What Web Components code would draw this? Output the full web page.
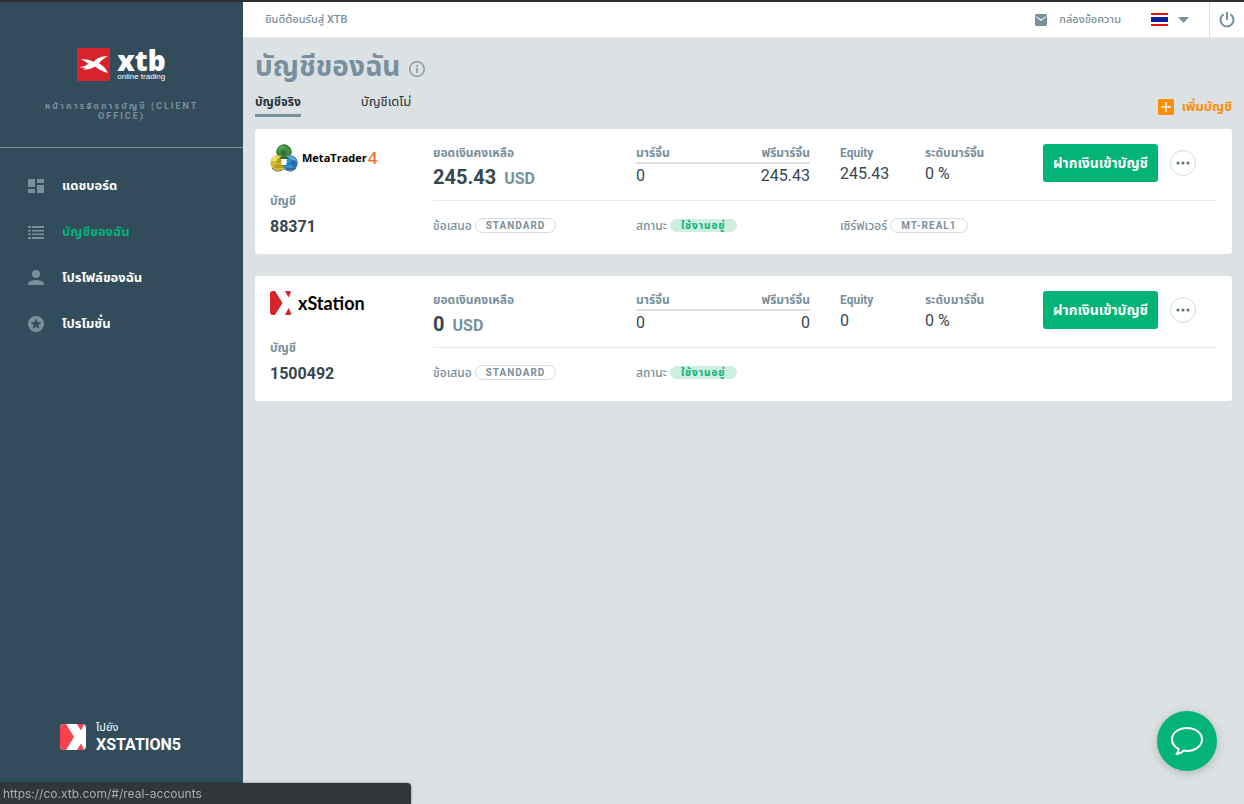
<!DOCTYPE html>
<html lang="th">
<head>
<meta charset="utf-8">
<meta name="viewport" content="width=device-width, initial-scale=1">
<title>XTB Client Office</title>
<style>
:root {
    --color-side: #324c5b;
    --color-muted: #78909c;
    --color-dark: #37474f;
    --color-page: #dce1e4;
    --color-green: #04b376;
    --color-orange: #ff8f00;
}

html, body {
    margin: 0;
    padding: 0;
}

body {
    font-family: Roboto, "Noto Sans Thai", Loma, "Liberation Sans", sans-serif;
    font-size: 12px;
    line-height: 18px;
    color: var(--color-dark);
    background-color: var(--color-page);
}
</style>
</head>
<body>
<client-office></client-office>

<script>
'use strict'

const RESET = `
    :host, div, a, button { box-sizing: border-box; }
    h1, h3, p, button { margin: 0; padding: 0; }
    a { color: inherit; text-decoration: none; }
    button { font: inherit; color: inherit; border: 0; background: none; cursor: pointer; }
`;

// Icons: [width, height, viewBox, markup]
const ICONS = {
    dashboard: [16, 14, '0 0 16 14', '<path d="M0 0h7v8H0zM0 10h7v4H0zM9 0h7v4H9zM9 6h7v8H9z"/>'],
    list: [16, 13, '0 0 16 13', '<path d="M0 0h3v2H0zM4 0h12v2H4zM0 4h3v1.500H0zM4 4h12v1.500H4zM0 7.500h3V9H0zM4 7.500h12V9H4zM0 11h3v2H0zM4 11h12v2H4z"/>'],
    person: [16, 16, '0 0 16 16', '<circle cx="8" cy="4" r="4"/><path d="M0 15v-1c0-3 5-4 8-4s8 1 8 4v1z"/>'],
    star: [16, 16, '2 2 20 20', '<path d="M12 2a10 10 0 1 0 0 20 10 10 0 0 0 0-20zm4.2 16L12 15.5 7.8 18l1.1-4.8-3.6-3.2 4.8-.4L12 5l1.9 4.6 4.8.4-3.6 3.2z"/>'],
    mail: [12, 12, '0 0 12 12', '<path fill-rule="evenodd" d="M1 0h10l1 1v10l-1 1H1l-1-1V1zM1 2v1l5 4 5-4V2L6 5.500z"/>'],
    power: [16, 16, '0 0 16 16', '<path d="M4.600 2.400a6.500 6.500 0 1 0 6.800 0M8 0v8" fill="none" stroke="currentColor" stroke-width="2"/>'],
    info: [16, 16, '0 0 16 16', '<circle cx="8" cy="8" r="7.300" fill="none" stroke="currentColor" stroke-width="1.300"/><path d="M7.300 4h1.400v1.500H7.300zM7.300 6.800h1.400V12H7.300z"/>'],
    plus: [16, 16, '0 0 16 16', '<path fill-rule="evenodd" d="M1 0h14l1 1v14l-1 1H1l-1-1V1zM7 3v4H3v2h4v4h2V9h4V7H9V3z"/>'],
    caret: [11, 6, '0 0 11 6', '<path d="M0 0h11L5.500 6z"/>'],
    dots: [14, 4, '0 0 14 4', '<circle cx="2" cy="2" r="1.500"/><circle cx="7" cy="2" r="1.500"/><circle cx="12" cy="2" r="1.500"/>'],
    chat: [32, 28, '0 0 32 28', '<path d="M16 1C7.500 1 1 6 1 12.500c0 4 2.500 7.300 6.500 9.300.3 2-.5 3.700-2 5.200 3.500-.3 5.500-1.500 7.200-3.400 1 .2 2.200.3 3.300.3 8.500 0 15-5 15-11.400S24.500 1 16 1z" fill="none" stroke="currentColor" stroke-width="2" stroke-linejoin="round"/>'],
    flag: [17, 13, '0 0 17 13', '<path fill="#fff" d="M0 0h17v13H0z"/><path fill="#e8110f" d="M0 0h17v2H0zM0 11h17v2H0z"/><path fill="#0a1f9c" d="M0 4h17v5H0z"/>'],
    xtb: [33, 33, '0 0 33 33', '<path fill="#d9232a" d="M0 0h33v33H0z"/><path fill="#fff" d="M4 11.500c5-.8 9 .2 12.500 2.500C20 9.500 25 8.200 31 8c-3.500 2-7 4.500-9 7.500 4 2 7 5 9 9.500-4.500-1.200-9-3-13-6.500-4.500 3-9 3.700-12 2.500 1.500-.3 2-.5 3.200-1.200-2.500.2-4.700 0-6.700-.8 3.500-.4 6.500-1.300 9-3.300C9.500 14.500 7.500 12.500 4 11.500z"/>'],
    station: [26, 26, '0 0 26 26', '<rect width="26" height="26" rx="4" fill="#fff"/><path fill="#f9424f" d="M4 0h2l8 13-8 13H4a4 4 0 0 1-4-4V4a4 4 0 0 1 4-4zM17 0h5a4 4 0 0 1 2 .6L21 6.500zM17 26h5a4 4 0 0 0 2-.6l-3-5.900z"/>'],
    xstation: [22, 24, '0 0 22 24', '<path fill="#d9232a" d="M3 0h2l7.500 12L5 24H3a3 3 0 0 1-3-3V3a3 3 0 0 1 3-3zM15 0h5l1 1-2.500 5.500zM15 24h5l1.500-1L18.500 17z"/>'],
    metatrader: [28, 29, '0 0 28 29', `
        <circle cx="14" cy="8" r="7.500" fill="#3f8f3d"/>
        <path fill="#57ab50" d="M8 6c1-5 5-6 8-5.500C14 4 11 6 8 6z"/>
        <circle cx="8" cy="19" r="7.700" fill="#d3b92d"/>
        <path fill="#f0df67" d="M1 17c1-4 5-6 9-4l-2 4z"/>
        <circle cx="20" cy="19" r="7.700" fill="#276fac"/>
        <path fill="#65a9d4" d="M16 12c4-1 9 0 11 5l-5-1z"/>
        <path fill="#fff" d="M14 12l4 4-2 5h-4l-2-5z"/>
        <circle cx="14" cy="9" r="2.500" fill="#2f6f33"/><path fill="#2f6f33" d="M9 15c1-4 9-4 10 0z"/>
        <circle cx="9" cy="17" r="2.500" fill="#b79a1c"/><path fill="#b79a1c" d="M4 24c1-5 9-5 10 0z"/>
        <circle cx="19" cy="17" r="2.500" fill="#2f8fd0"/><path fill="#2f8fd0" d="M14 24c1-5 9-5 10 0z"/>
        <path d="M2 24c3 4 7 4 12 1 5 3 9 3 12-1M7 10c-1-5 2-9 7-9s8 4 7 9" fill="none" stroke="#3a5a4a" stroke-width=".8"/>`]
};

// <app-icon name="..."> draws one icon of the list above
class AppIcon extends HTMLElement {
    constructor() {
        super();
        this.attachShadow({ mode: 'open' });
    }

    connectedCallback() {
        const [width, height, box, markup] = ICONS[this.getAttribute('name')];
        this.shadowRoot.innerHTML = `
        <style>
            :host { display: block; flex: none; }
            svg { display: block; }
        </style>
        <svg width="${width}" height="${height}" viewBox="${box}" fill="currentColor" aria-hidden="true">${markup}</svg>`;
    }
}

// One link of the side menu
class NavItem extends HTMLElement {
    constructor() {
        super();
        this.attachShadow({ mode: 'open' });
    }

    connectedCallback() {
        const active = this.hasAttribute('active');
        this.shadowRoot.innerHTML = `
        <style>
            ${RESET}
            :host { display: block; }
            a {
                display: flex;
                align-items: center;
                height: 46px;
                padding-left: 28px;
                gap: 18px;
                font-size: 13px;
                font-weight: bold;
                color: #fff;
            }
            a.active { color: var(--color-green); }
            app-icon { color: var(--color-muted); }
        </style>
        <a href="${this.getAttribute('href')}" class="${active ? 'active' : ''}">
            <app-icon name="${this.getAttribute('icon')}"></app-icon>
            <span><slot></slot></span>
        </a>`;
    }
}

class SideBar extends HTMLElement {
    constructor() {
        super();
        this.attachShadow({ mode: 'open' });
    }

    connectedCallback() {
        this.shadowRoot.innerHTML = `
        <style>
            ${RESET}
            :host {
                display: flex;
                flex-direction: column;
                background-color: var(--color-side);
                color: #fff;
            }
            .brand {
                display: flex;
                flex-direction: column;
                align-items: center;
                gap: 20px;
                padding: 46px 40px 26px;
                border-bottom: 1px solid var(--color-muted);
            }
            .logo {
                display: flex;
                gap: 7px;
            }
            .logo b {
                display: block;
                font: 800 28px/24px "Open Sans", sans-serif;
            }
            .logo small {
                display: block;
                font: 8px/9px "Liberation Sans", sans-serif;
            }
            .subtitle {
                font-size: 9px;
                line-height: 10px;
                font-weight: bold;
                letter-spacing: 2px;
                text-align: center;
                color: var(--color-muted);
            }
            nav { padding-top: 15px; }
            .station {
                display: flex;
                align-items: center;
                gap: 10px;
                margin-top: auto;
                padding: 0 0 50px 60px;
                font-size: 11px;
                line-height: 16px;
            }
            .station b {
                display: block;
                font-size: 16px;
                line-height: 18px;
            }
        </style>
        <div class="brand">
            <a class="logo" href="#/">
                <app-icon name="xtb"></app-icon>
                <span><b>xtb</b><small>online trading</small></span>
            </a>
            <p class="subtitle">หน้าการจัดการบัญชี (CLIENT OFFICE)</p>
        </div>
        <nav>
            <nav-item href="#/dashboard" icon="dashboard">แดชบอร์ด</nav-item>
            <nav-item href="#/real-accounts" icon="list" active>บัญชีของฉัน</nav-item>
            <nav-item href="#/profile" icon="person">โปรไฟล์ของฉัน</nav-item>
            <nav-item href="#/promotions" icon="star">โปรโมชั่น</nav-item>
        </nav>
        <a class="station" href="#/xstation">
            <app-icon name="station"></app-icon>
            <span>ไปยัง<b>XSTATION5</b></span>
        </a>`;
    }
}

class TopBar extends HTMLElement {
    constructor() {
        super();
        this.attachShadow({ mode: 'open' });
    }

    connectedCallback() {
        this.shadowRoot.innerHTML = `
        <style>
            ${RESET}
            :host {
                display: flex;
                align-items: center;
                height: 36px;
                padding-left: 22px;
                background-color: #fff;
                color: var(--color-muted);
                font-size: 11px;
                font-weight: 500;
                border-bottom: 1px solid #e4e8ea;
            }
            .inbox {
                display: flex;
                align-items: center;
                gap: 12px;
                margin-left: auto;
            }
            .language {
                display: flex;
                align-items: center;
                gap: 10px;
                margin: 0 20px 0 30px;
            }
            .logout {
                display: flex;
                align-items: center;
                justify-content: center;
                width: 35px;
                height: 35px;
                border-left: 1px solid #dde1e4;
            }
        </style>
        <p>ยินดีต้อนรับสู่ XTB</p>
        <a class="inbox" href="#/inbox"><app-icon name="mail"></app-icon><span>กล่องข้อความ</span></a>
        <button class="language" aria-label="ภาษา"><app-icon name="flag"></app-icon><app-icon name="caret"></app-icon></button>
        <button class="logout" aria-label="ออกจากระบบ"><app-icon name="power"></app-icon></button>`;
    }
}

// Rounded label, grey outline or green fill
class PillBadge extends HTMLElement {
    constructor() {
        super();
        this.attachShadow({ mode: 'open' });
    }

    connectedCallback() {
        this.shadowRoot.innerHTML = `
        <style>
            :host {
                display: block;
                box-sizing: border-box;
                padding: 0 10px;
                border: 1px solid #d5dbde;
                border-radius: 8px;
                font-size: 10px;
                line-height: 13px;
                font-weight: bold;
                letter-spacing: 1px;
            }
            :host([green]) {
                border-color: #cdeee0;
                background-color: #cdeee0;
                color: var(--color-green);
                line-height: 11px;
            }
        </style>
        <slot></slot>`;
    }
}

class AccountCard extends HTMLElement {
    constructor() {
        super();
        this.attachShadow({ mode: 'open' });
    }

    connectedCallback() {
        const value = name => this.getAttribute(name);
        const server = value('server')
            ? `<div class="detail">เซิร์ฟเวอร์<pill-badge>${value('server')}</pill-badge></div>`
            : '';

        this.shadowRoot.innerHTML = `
        <style>
            ${RESET}
            :host {
                display: flex;
                padding: 15px 15px 10px;
                border-radius: 3px;
                background-color: #fff;
            }
            h3 {
                font-size: 12px;
                font-weight: bold;
                line-height: 18px;
                color: var(--color-muted);
                white-space: nowrap;
            }
            .account { flex: 0 0 163px; }
            .platform { height: 48px; }
            .number {
                font-size: 16px;
                font-weight: bold;
                line-height: 34px;
            }
            .body { flex: 1; }
            .row {
                display: grid;
                grid-template-columns: 203fr 204fr 203fr 174fr;
            }
            .summary {
                height: 57px;
                border-bottom: 1px solid #e8ebed;
                font-size: 16px;
                line-height: 24px;
            }
            .balance {
                font-size: 20px;
                font-weight: bold;
                line-height: 30px;
            }
            .balance span {
                margin-left: 8px;
                font-size: 16px;
                color: var(--color-muted);
            }
            .margin {
                display: grid;
                grid-template-columns: 1fr 1fr;
                align-content: start;
                margin-right: 30px;
            }
            .margin h3 { border-bottom: 2px solid #dde1e4; }
            .margin :nth-child(even) { text-align: right; }
            .equity {
                display: grid;
                grid-template-columns: 85fr 118fr;
            }
            .actions {
                display: flex;
                align-items: flex-start;
                gap: 12px;
            }
            .deposit {
                height: 38px;
                padding: 0 10px;
                border-radius: 3px;
                background-color: var(--color-green);
                color: #fff;
                font-size: 14px;
                font-weight: bold;
                white-space: nowrap;
            }
            .more {
                display: flex;
                align-items: center;
                justify-content: center;
                width: 26px;
                height: 26px;
                margin-top: 6px;
                border: 1px solid #d5dbde;
                border-radius: 50%;
                color: #56707d;
            }
            .details { padding-top: 16px; }
            .detail {
                display: flex;
                align-items: center;
                gap: 3px;
                height: 17px;
                font-weight: 500;
                color: var(--color-muted);
                white-space: nowrap;
            }
        </style>
        <div class="account">
            <div class="platform"><slot></slot></div>
            <h3>บัญชี</h3>
            <p class="number">${value('number')}</p>
        </div>
        <div class="body">
            <div class="row summary">
                <div>
                    <h3>ยอดเงินคงเหลือ</h3>
                    <p class="balance">${value('balance')}<span>USD</span></p>
                </div>
                <div class="margin">
                    <h3>มาร์จิ้น</h3><h3>ฟรีมาร์จิ้น</h3>
                    <p>0</p><p>${value('balance')}</p>
                </div>
                <div class="equity">
                    <div><h3>Equity</h3><p>${value('balance')}</p></div>
                    <div><h3>ระดับมาร์จิ้น</h3><p>0 %</p></div>
                </div>
                <div class="actions">
                    <button class="deposit">ฝากเงินเข้าบัญชี</button>
                    <button class="more" aria-label="เพิ่มเติม"><app-icon name="dots"></app-icon></button>
                </div>
            </div>
            <div class="row details">
                <div class="detail">ข้อเสนอ<pill-badge>STANDARD</pill-badge></div>
                <div class="detail">สถานะ<pill-badge green>ใช้งานอยู่</pill-badge></div>
                ${server}
            </div>
        </div>`;
    }
}

// The trading platform's logo with its name beside it
class PlatformLogo extends HTMLElement {
    constructor() {
        super();
        this.attachShadow({ mode: 'open' });
    }

    connectedCallback() {
        this.shadowRoot.innerHTML = `
        <style>
            :host {
                display: flex;
                gap: 6px;
                color: #000;
                font: bold 18px/24px Lato, sans-serif;
            }
            :host([icon="metatrader"]) {
                gap: 4px;
                font: bold 11px/28px "Open Sans", sans-serif;
            }
            ::slotted(b) {
                margin-left: 1px;
                color: #f36f2c;
                font-size: 17px;
                font-weight: 600;
                line-height: 1px;
                vertical-align: -2px;
            }
        </style>
        <app-icon name="${this.getAttribute('icon')}"></app-icon>
        <span><slot></slot></span>`;
    }
}

class AccountsPage extends HTMLElement {
    constructor() {
        super();
        this.attachShadow({ mode: 'open' });
    }

    connectedCallback() {
        this.shadowRoot.innerHTML = `
        <style>
            ${RESET}
            :host {
                display: block;
                padding: 8px 12px;
            }
            .title {
                display: flex;
                align-items: center;
                gap: 9px;
                color: var(--color-muted);
            }
            h1 {
                padding-bottom: 4px;
                font-size: 28px;
                font-weight: bold;
                line-height: 42px;
            }
            .bar {
                display: flex;
                align-items: flex-start;
                gap: 60px;
                height: 37px;
                font-size: 13px;
                line-height: 20px;
                color: #263238;
            }
            .bar a { white-space: nowrap; }
            .tab { height: 25px; }
            .tab.active {
                font-size: 12px;
                font-weight: bold;
                border-bottom: 3px solid var(--color-muted);
            }
            .add {
                display: flex;
                align-items: center;
                gap: 8px;
                margin: 5px 0 0 auto;
                color: var(--color-orange);
                font-weight: bold;
            }
            .list {
                display: grid;
                gap: 22px;
            }
        </style>
        <div class="title">
            <h1>บัญชีของฉัน</h1>
            <app-icon name="info"></app-icon>
        </div>
        <div class="bar">
            <a class="tab active" href="#/real-accounts">บัญชีจริง</a>
            <a class="tab" href="#/demo-accounts">บัญชีเดโม่</a>
            <a class="add" href="#/new-account"><app-icon name="plus"></app-icon>เพิ่มบัญชี</a>
        </div>
        <div class="list">
            <account-card number="88371" balance="245.43" server="MT-REAL1">
                <platform-logo icon="metatrader">MetaTrader<b>4</b></platform-logo>
            </account-card>
            <account-card number="1500492" balance="0">
                <platform-logo icon="xstation">xStation</platform-logo>
            </account-card>
        </div>`;
    }
}

class ClientOffice extends HTMLElement {
    constructor() {
        super();
        this.attachShadow({ mode: 'open' });
    }

    connectedCallback() {
        this.shadowRoot.innerHTML = `
        <style>
            ${RESET}
            :host {
                display: grid;
                grid-template-columns: 243px 1fr;
                min-height: 100vh;
                border-top: 2px solid #2f2e30;
            }
            .chat {
                position: fixed;
                right: 27px;
                bottom: 33px;
                display: flex;
                align-items: center;
                justify-content: center;
                width: 60px;
                height: 60px;
                border-radius: 50%;
                background-color: var(--color-green);
                color: #fff;
                box-shadow: 0 2px 10px rgb(0, 0, 0, 0.2);
            }
            .status {
                position: fixed;
                left: 0;
                bottom: 0;
                width: 33%;
                padding-left: 3px;
                border-top-right-radius: 4px;
                background-color: #323639;
                box-shadow: 0 0 3px rgb(0, 0, 0, 0.4);
                color: #a9adb1;
                font-family: Inter, sans-serif;
                font-size: 12px;
                line-height: 21px;
            }
        </style>
        <side-bar></side-bar>
        <main>
            <top-bar></top-bar>
            <accounts-page></accounts-page>
        </main>
        <button class="chat" aria-label="แชท"><app-icon name="chat"></app-icon></button>
        <div class="status">https://co.xtb.com/#/real-accounts</div>`;
    }
}

customElements.define('app-icon', AppIcon);
customElements.define('nav-item', NavItem);
customElements.define('side-bar', SideBar);
customElements.define('top-bar', TopBar);
customElements.define('pill-badge', PillBadge);
customElements.define('platform-logo', PlatformLogo);
customElements.define('account-card', AccountCard);
customElements.define('accounts-page', AccountsPage);
customElements.define('client-office', ClientOffice);
</script>
</body>
</html>
